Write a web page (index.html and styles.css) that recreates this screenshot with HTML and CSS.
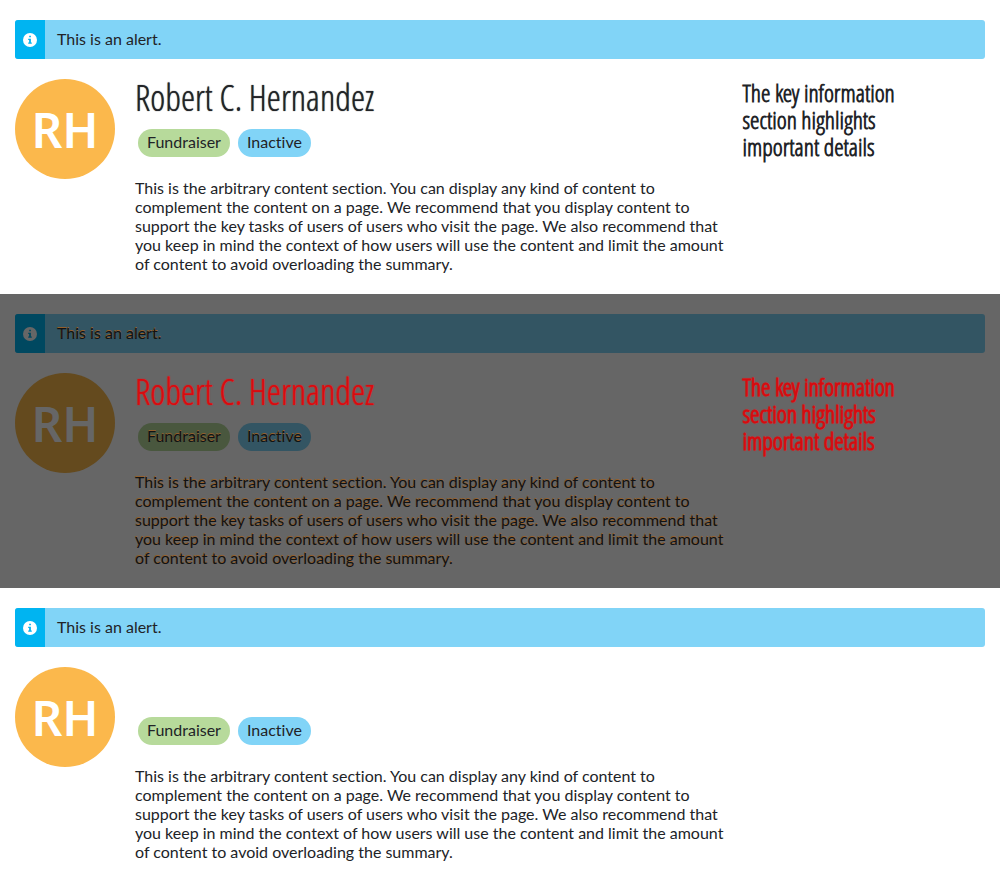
FILE: index.html
```
<!DOCTYPE html>
<html lang="en">
<head>
<meta charset="utf-8">
<meta name="viewport" content="width=device-width, initial-scale=1">
<title>Summary</title>
<link rel="stylesheet" href="styles.css">
</head>
<body>
<section class="panel">
  <div class="alert">
    <div class="alert-icon"><svg class="info" viewBox="0 0 14 14" aria-hidden="true"><circle cx="7" cy="7" r="7" fill="#fff"/><path d="M6.2 2.8h1.7v1.5H6.2zM5.2 5.7h2.7v3.9h.9v1.2H5.2V9.6h.9V6.9h-.9z" fill="#00b4f1"/></svg></div>
    <div class="alert-text">This is an alert.</div>
  </div>
  <div class="summary">
    <div class="avatar">RH</div>
    <div class="details">
      <h1 class="title">Robert C. Hernandez</h1>
      <div class="labels"><span class="label label-green">Fundraiser</span><span class="label label-blue">Inactive</span></div>
      <p class="content">This is the arbitrary content section. You can display any kind of content to<br>complement the content on a page. We recommend that you display content to<br>support the key tasks of users of users who visit the page. We also recommend that<br>you keep in mind the context of how users will use the content and limit the amount<br>of content to avoid overloading the summary.</p>
    </div>
    <div class="key-info">The key information<br>section highlights<br>important details</div>
  </div>
</section>
<section class="panel panel-diff">
  <div class="alert">
    <div class="alert-icon"><svg class="info" viewBox="0 0 14 14" aria-hidden="true"><circle cx="7" cy="7" r="7" fill="#666"/><path d="M6.2 2.8h1.7v1.5H6.2zM5.2 5.7h2.7v3.9h.9v1.2H5.2V9.6h.9V6.9h-.9z" fill="#004860"/></svg></div>
    <div class="alert-text">This is an alert.</div>
  </div>
  <div class="summary">
    <div class="avatar">RH</div>
    <div class="details">
      <h1 class="title">Robert C. Hernandez</h1>
      <div class="labels"><span class="label label-green">Fundraiser</span><span class="label label-blue">Inactive</span></div>
      <p class="content">This is the arbitrary content section. You can display any kind of content to<br>complement the content on a page. We recommend that you display content to<br>support the key tasks of users of users who visit the page. We also recommend that<br>you keep in mind the context of how users will use the content and limit the amount<br>of content to avoid overloading the summary.</p>
    </div>
    <div class="key-info">The key information<br>section highlights<br>important details</div>
  </div>
</section>
<section class="panel">
  <div class="alert">
    <div class="alert-icon"><svg class="info" viewBox="0 0 14 14" aria-hidden="true"><circle cx="7" cy="7" r="7" fill="#fff"/><path d="M6.2 2.8h1.7v1.5H6.2zM5.2 5.7h2.7v3.9h.9v1.2H5.2V9.6h.9V6.9h-.9z" fill="#00b4f1"/></svg></div>
    <div class="alert-text">This is an alert.</div>
  </div>
  <div class="summary">
    <div class="avatar">RH</div>
    <div class="details">
      <div class="title"></div>
      <div class="labels"><span class="label label-green">Fundraiser</span><span class="label label-blue">Inactive</span></div>
      <p class="content">This is the arbitrary content section. You can display any kind of content to<br>complement the content on a page. We recommend that you display content to<br>support the key tasks of users of users who visit the page. We also recommend that<br>you keep in mind the context of how users will use the content and limit the amount<br>of content to avoid overloading the summary.</p>
    </div>
    <div class="key-info"></div>
  </div>
</section>
</body>
</html>
```
FILE: styles.css
```
* { box-sizing: border-box; }
body {
  margin: 0;
  background: #fff;
  color: #212327;
  font-family: Lato, "Noto Sans", sans-serif;
  font-size: 16px;
  font-variant-ligatures: none;
  line-height: 19px;
}
.panel { padding: 20px 15px; }
.alert {
  display: flex;
  margin-bottom: 20px;
  border-radius: 3px;
  overflow: hidden;
  background: #81d4f7;
}
.alert-icon {
  display: flex;
  align-items: center;
  justify-content: center;
  width: 30px;
  background: #00b4f1;
}
.info { width: 14px; height: 14px; }
.alert-text { padding: 9px 12px 11px; }
.summary {
  display: grid;
  grid-template-columns: 100px minmax(0, 1fr) 25%;
}
.avatar {
  display: flex;
  align-items: center;
  justify-content: center;
  width: 100px;
  height: 100px;
  border-radius: 50%;
  background: #fbb84c;
  color: #fff;
  font-family: "Noto Sans", sans-serif;
  font-size: 48px;
  font-weight: 600;
}
.details { padding-left: 20px; }
.title {
  height: 38px;
  margin: 0 0 12px;
  font-family: "Open Sans Condensed Light", "Roboto Condensed", sans-serif;
  font-size: 36px;
  font-weight: 400;
  line-height: 38px;
  text-shadow: 0 0 1px #212327;
  white-space: nowrap;
}
.labels {
  display: flex;
  gap: 8px;
  padding-left: 3px;
}
.label {
  padding: 3px 9px 6px;
  border-radius: 14px;
}
.label-green { background: #b7da9b; }
.label-blue { background: #81d4f7; }
.content {
  margin: 21px 0 1px;
  white-space: nowrap;
}
.key-info {
  font-family: "Open Sans Condensed Light", "Roboto Condensed", sans-serif;
  font-weight: 700;
  font-size: 24px;
  line-height: 27px;
}
.panel-diff {
  background: #666;
  color: #101214;
  text-shadow: 0 -1px #94602c;
}
.panel-diff .alert,
.panel-diff .label-blue { background: #335563; }
.panel-diff .alert-icon { background: #004860; }
.panel-diff .avatar {
  background: #644a1e;
  color: #666;
  text-shadow: none;
}
.panel-diff .label-green { background: #49573e; }
.panel-diff .title,
.panel-diff .key-info {
  color: #d40c10;
  text-shadow: 0 0 1px #f01c20;
}
.panel-diff .title { text-shadow: 0 0 1px #f01c20, 0 0 1px #f01c20; }
```
